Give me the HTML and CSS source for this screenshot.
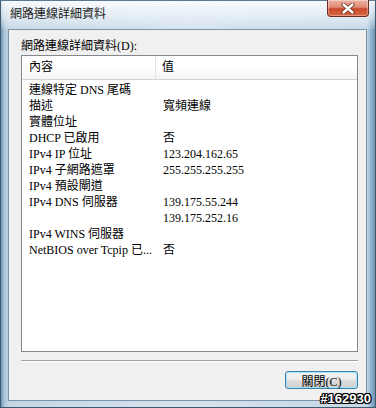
FILE: index.html
```html
<!DOCTYPE html>
<html lang="zh-Hant">
<head>
  <meta charset="UTF-8">
  <meta name="viewport" content="width=device-width, initial-scale=1.0">
  <title>網路連線詳細資料</title>
  <link rel="stylesheet" href="styles.css">
</head>
<body>
  <div class="window">
    <div class="titlebar">
      <span class="title">網路連線詳細資料</span>
      <button class="close-btn" aria-label="關閉">
        <svg width="16" height="11" viewBox="0 0 16 11">
          <path d="M3.5 1.5 L12.5 9.5 M12.5 1.5 L3.5 9.5" stroke="#6a3024" stroke-width="4.2" stroke-linecap="round"/>
          <path d="M3.5 1.5 L12.5 9.5 M12.5 1.5 L3.5 9.5" stroke="#ffffff" stroke-width="2.4" stroke-linecap="round"/>
        </svg>
      </button>
    </div>

    <div class="client">
      <div class="label">網路連線詳細資料(D):</div>

      <div class="listview">
        <div class="lv-header">
          <div class="lv-col name">內容</div>
          <div class="lv-col value">值</div>
        </div>
        <div class="lv-body">
          <div class="lv-row"><span class="name">連線特定 DNS 尾碼</span><span class="value"></span></div>
          <div class="lv-row"><span class="name">描述</span><span class="value">寬頻連線</span></div>
          <div class="lv-row"><span class="name">實體位址</span><span class="value"></span></div>
          <div class="lv-row"><span class="name">DHCP 已啟用</span><span class="value">否</span></div>
          <div class="lv-row"><span class="name">IPv4 IP 位址</span><span class="value">123.204.162.65</span></div>
          <div class="lv-row"><span class="name">IPv4 子網路遮罩</span><span class="value">255.255.255.255</span></div>
          <div class="lv-row"><span class="name">IPv4 預設閘道</span><span class="value"></span></div>
          <div class="lv-row"><span class="name">IPv4 DNS 伺服器</span><span class="value">139.175.55.244</span></div>
          <div class="lv-row"><span class="name"></span><span class="value">139.175.252.16</span></div>
          <div class="lv-row"><span class="name">IPv4 WINS 伺服器</span><span class="value"></span></div>
          <div class="lv-row"><span class="name">NetBIOS over Tcpip 已...</span><span class="value">否</span></div>
        </div>
      </div>

      <div class="separator"></div>

      <div class="actions">
        <button class="btn">關閉(C)</button>
      </div>
    </div>

    <div class="watermark">#162930</div>
  </div>
</body>
</html>
```

FILE: styles.css
```css
* {
  margin: 0;
  padding: 0;
  box-sizing: border-box;
}

body {
  font-family: "Liberation Serif", "Noto Sans CJK TC", serif;
  font-size: 12px;
  color: #000;
  background: #9fb9cf;
}

.window {
  position: relative;
  width: 376px;
  height: 408px;
  display: flex;
  flex-direction: column;
  background: linear-gradient(90deg, #6f93ae 0, #a9c3d8 3px, #c4d6e4 8px, #d6e3ee 50%, #c4d6e4 calc(100% - 8px), #8fb4d2 calc(100% - 4px), #6f93ae 100%);
  border: 1px solid #3e5a70;
  border-top-color: #5d7890;
}

.titlebar {
  height: 28px;
  display: flex;
  justify-content: space-between;
  align-items: flex-start;
  padding: 0 6px 0 9px;
  background: linear-gradient(180deg, rgba(255,255,255,0.85) 0, rgba(240,245,250,0.7) 50%, rgba(214,227,238,0.2) 100%);
}

.title {
  margin-top: 5px;
  font-family: "Noto Sans CJK TC", sans-serif;
  font-size: 12px;
  line-height: 14px;
  color: #1a1a1a;
}

.close-btn {
  width: 42px;
  height: 17px;
  margin-top: -1px;
  display: flex;
  align-items: center;
  justify-content: center;
  border: 1px solid #6b2e22;
  border-top: none;
  border-radius: 0 0 4px 4px;
  background: linear-gradient(180deg, #eeb4a4 0, #e08b72 45%, #c9472b 55%, #d8683f 100%);
  box-shadow: inset 0 0 0 1px rgba(255,255,255,0.35);
}

.client {
  flex: 1;
  margin: 0 8px 6px 7px;
  display: flex;
  flex-direction: column;
  padding: 8px 8px 0 12px;
  background: #f0f0f0;
  border: 1px solid #7b93a6;
}

.label {
  line-height: 16px;
  margin-bottom: 1px;
}

.listview {
  height: 297px;
  background: #fff;
  border: 1px solid #828790;
}

.lv-header {
  height: 24px;
  display: flex;
  background: linear-gradient(180deg, #ffffff 0, #ffffff 50%, #f3f4f6 100%);
  border-bottom: 1px solid #d5d5d5;
}

.lv-col {
  line-height: 23px;
  padding-left: 7px;
}

.lv-col.name {
  width: 134px;
  border-right: 1px solid #e3e5e8;
}

.lv-col.value {
  padding-left: 6px;
}

.lv-body {
  padding-top: 2px;
}

.lv-row {
  display: flex;
  height: 16px;
  line-height: 16px;
}

.lv-row .name {
  width: 134px;
  padding-left: 7px;
  white-space: nowrap;
  overflow: hidden;
}

.lv-row .value {
  padding-left: 7px;
}

.separator {
  margin-top: 8px;
  height: 2px;
  border-top: 1px solid #a0a0a0;
  border-bottom: 1px solid #ffffff;
}

.actions {
  display: flex;
  justify-content: flex-end;
  margin-top: 9px;
}

.btn {
  width: 73px;
  height: 18px;
  font-family: "Liberation Serif", "Noto Sans CJK TC", serif;
  font-size: 12px;
  color: #000;
  border: 1px solid #3c7fb1;
  border-radius: 3px;
  background: linear-gradient(180deg, #f2f2f2 0, #ebebeb 50%, #dddddd 51%, #cfcfcf 100%);
  box-shadow: inset 0 0 0 1px #a8e3f8;
}

.watermark {
  position: absolute;
  right: 4px;
  bottom: 1px;
  font-family: "Liberation Sans", sans-serif;
  font-weight: bold;
  font-size: 13px;
  line-height: 14px;
  color: #fff;
  text-shadow: 1px 0 0 #000, -1px 0 0 #000, 0 1px 0 #000, 0 -1px 0 #000, 1px 1px 0 #000, -1px -1px 0 #000, 1px -1px 0 #000, -1px 1px 0 #000;
}
```
